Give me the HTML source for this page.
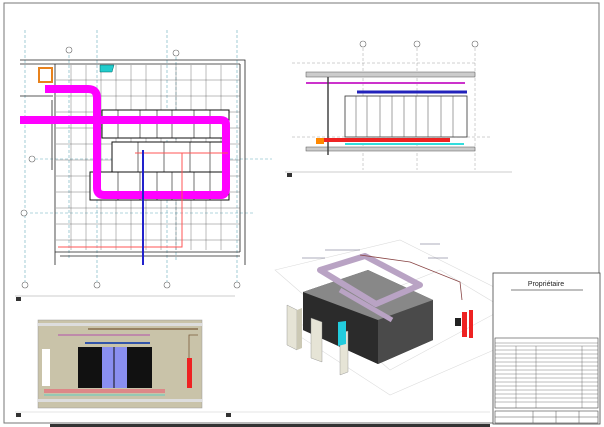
<!DOCTYPE html>
<html><head><meta charset="utf-8"><style>
html,body{margin:0;padding:0;background:#fff;width:604px;height:427px;overflow:hidden}
svg{display:block}
text{font-family:"Liberation Sans",sans-serif}
</style></head><body>
<svg width="604" height="427" viewBox="0 0 604 427" xmlns="http://www.w3.org/2000/svg">
<rect width="604" height="427" fill="#fff"/>
<rect x="4" y="3" width="595" height="420" fill="none" stroke="#777" stroke-width="1"/>
<rect x="50" y="424" width="440" height="3" fill="#333"/>

<!-- PLAN -->
<g stroke="#6ab" stroke-width="0.6" stroke-dasharray="3,2" fill="none">
<line x1="25" y1="30" x2="25" y2="282"/><line x1="97" y1="30" x2="97" y2="282"/>
<line x1="167" y1="30" x2="167" y2="282"/><line x1="237" y1="30" x2="237" y2="282"/>
<line x1="69" y1="50" x2="69" y2="260"/><line x1="176" y1="52" x2="176" y2="260"/>
<line x1="30" y1="159" x2="272" y2="159"/><line x1="25" y1="213" x2="255" y2="213"/>
</g>
<g fill="none" stroke="#222" stroke-width="0.8">
<polyline points="20,60 245,60 245,265"/>
<line x1="20" y1="64" x2="240" y2="64"/>
<line x1="55" y1="64" x2="55" y2="265"/>
<line x1="20" y1="96" x2="53" y2="96"/>
<line x1="52" y1="100" x2="52" y2="170"/>
<line x1="240" y1="64" x2="240" y2="252"/>
<line x1="55" y1="252" x2="240" y2="252"/>
<line x1="60" y1="256" x2="240" y2="256"/>
</g>
<g stroke="#555" stroke-width="0.4">
<line x1="71" y1="65" x2="71" y2="250"/><line x1="86" y1="65" x2="86" y2="250"/><line x1="101" y1="65" x2="101" y2="250"/>
<line x1="116" y1="65" x2="116" y2="250"/><line x1="131" y1="65" x2="131" y2="250"/><line x1="146" y1="65" x2="146" y2="250"/>
<line x1="161" y1="65" x2="161" y2="250"/><line x1="176" y1="65" x2="176" y2="250"/><line x1="191" y1="65" x2="191" y2="250"/>
<line x1="206" y1="65" x2="206" y2="250"/><line x1="221" y1="65" x2="221" y2="250"/>
<line x1="56" y1="80" x2="240" y2="80"/><line x1="56" y1="96" x2="240" y2="96"/><line x1="56" y1="112" x2="240" y2="112"/>
<line x1="56" y1="128" x2="240" y2="128"/><line x1="56" y1="144" x2="240" y2="144"/><line x1="56" y1="160" x2="240" y2="160"/>
<line x1="56" y1="176" x2="240" y2="176"/><line x1="56" y1="192" x2="240" y2="192"/><line x1="56" y1="208" x2="240" y2="208"/>
<line x1="56" y1="224" x2="240" y2="224"/><line x1="56" y1="240" x2="240" y2="240"/>
</g>
<g fill="#fff" stroke="#111" stroke-width="1">
<rect x="102" y="110" width="127" height="28"/>
<rect x="112" y="142" width="117" height="30"/>
<rect x="90" y="172" width="139" height="28"/>
</g>
<g stroke="#111" stroke-width="0.6">
<line x1="118" y1="110" x2="118" y2="138"/><line x1="140" y1="110" x2="140" y2="138"/><line x1="157" y1="110" x2="157" y2="138"/>
<line x1="172" y1="110" x2="172" y2="138"/><line x1="194" y1="110" x2="194" y2="138"/><line x1="210" y1="110" x2="210" y2="138"/>
<line x1="138" y1="142" x2="138" y2="172"/><line x1="164" y1="142" x2="164" y2="172"/><line x1="190" y1="142" x2="190" y2="172"/><line x1="210" y1="142" x2="210" y2="172"/>
<line x1="118" y1="172" x2="118" y2="200"/><line x1="140" y1="172" x2="140" y2="200"/><line x1="157" y1="172" x2="157" y2="200"/>
<line x1="172" y1="172" x2="172" y2="200"/><line x1="194" y1="172" x2="194" y2="200"/><line x1="210" y1="172" x2="210" y2="200"/>
</g>
<rect x="39" y="68" width="13" height="14" fill="none" stroke="#e8821c" stroke-width="2"/>
<polygon points="100,65 114,65 112,72 100,72" fill="#2cc" stroke="#066" stroke-width="0.5"/>
<!-- magenta duct -->
<g fill="none" stroke="#f0f" stroke-width="8" stroke-linejoin="round">
<line x1="20" y1="120" x2="100" y2="120"/>
<path d="M45,89 H88 Q97,89 97,98 V188 Q97,195 104,195 H221 Q226,195 226,188 V124 Q226,120 220,120 H97"/>
</g>
<!-- red/blue -->
<g fill="none" stroke="#f55" stroke-width="1">
<polyline points="135,153 228,153"/><polyline points="182,153 182,247 58,247"/>
</g>
<line x1="143" y1="150" x2="143" y2="265" stroke="#22c" stroke-width="2"/>
<g fill="#fff" stroke="#666" stroke-width="0.6">
<circle cx="25" cy="285" r="3"/><circle cx="97" cy="285" r="3"/><circle cx="167" cy="285" r="3"/><circle cx="237" cy="285" r="3"/>
<circle cx="69" cy="50" r="3"/><circle cx="176" cy="53" r="3"/><circle cx="24" cy="213" r="3"/><circle cx="32" cy="159" r="3"/>
</g>
<line x1="15" y1="296" x2="235" y2="296" stroke="#999" stroke-width="0.6"/>
<rect x="16" y="297" width="5" height="4" fill="#333"/>

<!-- ELEVATION -->
<g stroke="#888" stroke-width="0.4" stroke-dasharray="3,2"><line x1="363" y1="48" x2="363" y2="170"/><line x1="417" y1="48" x2="417" y2="170"/><line x1="475" y1="48" x2="475" y2="170"/>
<line x1="292" y1="63" x2="475" y2="63"/><line x1="292" y1="137" x2="490" y2="137"/></g>
<g fill="#fff" stroke="#666" stroke-width="0.6"><circle cx="363" cy="44" r="3"/><circle cx="417" cy="44" r="3"/><circle cx="475" cy="44" r="3"/></g>
<rect x="306" y="72" width="169" height="5" fill="#ccc" stroke="#555" stroke-width="0.5"/>
<rect x="306" y="147" width="169" height="4" fill="#ccc" stroke="#555" stroke-width="0.5"/>
<line x1="306" y1="83" x2="465" y2="83" stroke="#c3c" stroke-width="2"/>
<line x1="357" y1="92" x2="467" y2="92" stroke="#22b" stroke-width="3"/>
<rect x="345" y="96" width="122" height="41" fill="#fff" stroke="#333" stroke-width="0.8"/>
<g stroke="#444" stroke-width="0.5"><line x1="356" y1="96" x2="356" y2="137"/><line x1="367" y1="96" x2="367" y2="137"/><line x1="380" y1="96" x2="380" y2="137"/><line x1="392" y1="96" x2="392" y2="137"/><line x1="404" y1="96" x2="404" y2="137"/><line x1="416" y1="96" x2="416" y2="137"/><line x1="428" y1="96" x2="428" y2="137"/><line x1="441" y1="96" x2="441" y2="137"/><line x1="453" y1="96" x2="453" y2="137"/></g>
<line x1="328" y1="77" x2="328" y2="155" stroke="#444" stroke-width="1.5"/>
<rect x="316" y="138" width="134" height="4" fill="#e22"/>
<rect x="316" y="138" width="8" height="6" fill="#f80"/>
<line x1="345" y1="144" x2="464" y2="144" stroke="#3dd" stroke-width="2"/>
<line x1="285" y1="172" x2="512" y2="172" stroke="#999" stroke-width="0.6"/>
<rect x="287" y="173" width="5" height="4" fill="#333"/>

<!-- BOTTOM LEFT SECTION -->
<rect x="38" y="320" width="164" height="88" fill="#c9c3a9" stroke="#999" stroke-width="0.5"/>
<rect x="38" y="323" width="164" height="3" fill="#ddd"/>
<rect x="38" y="399" width="164" height="3" fill="#ddd"/>
<line x1="58" y1="335" x2="150" y2="335" stroke="#b7a" stroke-width="1.5"/>
<line x1="88" y1="329" x2="198" y2="329" stroke="#7a5b3a" stroke-width="1.2"/>
<line x1="85" y1="343" x2="150" y2="343" stroke="#35a" stroke-width="2"/>
<rect x="78" y="347" width="74" height="41" fill="#111"/>
<rect x="102" y="347" width="25" height="41" fill="#8a8ff0"/>
<line x1="114" y1="347" x2="114" y2="388" stroke="#111" stroke-width="1"/>
<rect x="42" y="349" width="8" height="37" fill="#fff"/>
<rect x="187" y="358" width="5" height="30" fill="#e22"/>
<polyline points="189,358 189,335 198,335" fill="none" stroke="#7a5b3a" stroke-width="0.8"/>
<rect x="44" y="389" width="121" height="4" fill="#d88"/>
<line x1="44" y1="395" x2="165" y2="395" stroke="#7cb" stroke-width="1.2"/>
<line x1="15" y1="412" x2="490" y2="412" stroke="#ccc" stroke-width="0.6"/>
<rect x="16" y="413" width="5" height="4" fill="#333"/>
<rect x="226" y="413" width="5" height="4" fill="#333"/>

<!-- 3D VIEW -->
<g fill="none" stroke="#ddd" stroke-width="0.6">
<polygon points="275,270 400,240 520,300 390,370"/>
<polygon points="290,330 440,270 540,330 390,395"/>
</g>
<polygon points="303,292 368,270 433,300 433,340 378,364 303,330" fill="#3a3a3a"/>
<polygon points="303,292 378,320 378,364 303,330" fill="#2b2b2b"/>
<polygon points="378,320 433,300 433,340 378,364" fill="#4a4a4a"/>
<polygon points="303,292 368,270 433,300 378,320" fill="#888"/>
<path d="M320,270 L365,256 L420,285 L376,304 Z" fill="none" stroke="#b9a3c4" stroke-width="6" stroke-linejoin="round"/>
<line x1="340" y1="290" x2="392" y2="320" stroke="#b9a3c4" stroke-width="5"/>
<polyline points="360,255 410,262 460,282 462,300" fill="none" stroke="#844" stroke-width="0.8"/>
<polygon points="287,305 297,310 297,350 287,345" fill="#e6e4d6" stroke="#888" stroke-width="0.4"/>
<polygon points="297,310 302,308 302,348 297,350" fill="#ccc9b5"/>
<polygon points="311,318 322,322 322,362 311,358" fill="#e6e4d6" stroke="#888" stroke-width="0.4"/>
<polygon points="340,333 348,331 348,372 340,375" fill="#e6e4d6" stroke="#888" stroke-width="0.4"/>
<polygon points="338,322 346,321 346,344 338,346" fill="#2cd"/>
<rect x="462" y="312" width="5" height="25" fill="#e22"/><rect x="469" y="310" width="4" height="28" fill="#e22"/>
<rect x="455" y="318" width="6" height="8" fill="#222"/>
<g stroke="#335" stroke-width="0.4"><line x1="302" y1="258" x2="325" y2="258"/><line x1="325" y1="250" x2="360" y2="250"/><line x1="420" y1="244" x2="440" y2="244"/><line x1="428" y1="258" x2="448" y2="258"/></g>

<!-- TITLE BLOCK -->
<rect x="493" y="273" width="107" height="151" fill="#fff" stroke="#444" stroke-width="0.8"/>
<text x="546" y="286" font-size="7" text-anchor="middle" fill="#222">Propriétaire</text>
<line x1="511" y1="290" x2="583" y2="290" stroke="#555" stroke-width="0.7"/>
<rect x="495" y="338" width="103" height="70" fill="none" stroke="#444" stroke-width="0.6"/>
<g stroke="#555" stroke-width="0.4">
<line x1="495" y1="343" x2="598" y2="343"/><line x1="495" y1="346" x2="598" y2="346"/>
<line x1="495" y1="350" x2="598" y2="350"/><line x1="495" y1="354" x2="598" y2="354"/><line x1="495" y1="358" x2="598" y2="358"/>
<line x1="495" y1="362" x2="598" y2="362"/><line x1="495" y1="366" x2="598" y2="366"/><line x1="495" y1="370" x2="598" y2="370"/>
<line x1="495" y1="374" x2="598" y2="374"/><line x1="495" y1="378" x2="598" y2="378"/><line x1="495" y1="382" x2="598" y2="382"/>
<line x1="495" y1="386" x2="598" y2="386"/><line x1="495" y1="390" x2="598" y2="390"/><line x1="495" y1="394" x2="598" y2="394"/>
<line x1="495" y1="398" x2="598" y2="398"/><line x1="495" y1="402" x2="598" y2="402"/>
<line x1="516" y1="346" x2="516" y2="408"/><line x1="536" y1="346" x2="536" y2="408"/><line x1="582" y1="346" x2="582" y2="408"/>
</g>
<rect x="495" y="411" width="103" height="12" fill="none" stroke="#444" stroke-width="0.6"/>
<g stroke="#555" stroke-width="0.5"><line x1="495" y1="417" x2="598" y2="417"/><line x1="533" y1="411" x2="533" y2="423"/><line x1="556" y1="411" x2="556" y2="423"/><line x1="579" y1="411" x2="579" y2="423"/></g>
</svg>
</body></html>
